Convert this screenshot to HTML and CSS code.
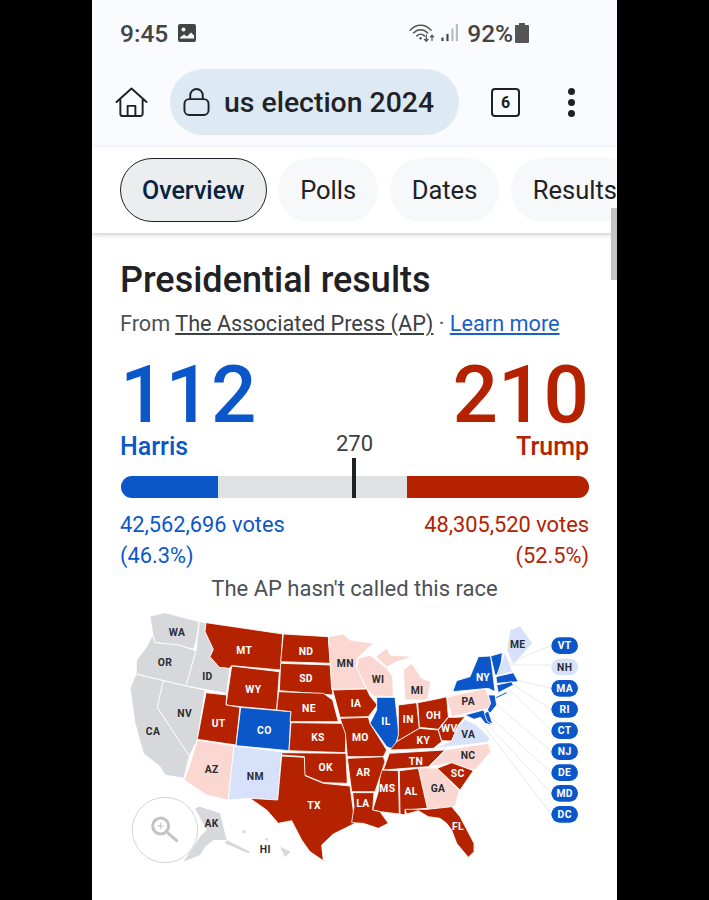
FILE: index.html
```html
<!DOCTYPE html>
<html lang="en">
<head>
<meta charset="utf-8">
<title>us election 2024</title>
<link rel="stylesheet" href="styles.css">
</head>
<body>
<div class="phone">
  <header class="chrome">
    <div class="status">
      <span class="time">9:45</span>
      <svg class="ic-photo" viewBox="0 0 18 18"><path fill="#444" fill-rule="evenodd" d="M2 0h14a2 2 0 0 1 2 2v14a2 2 0 0 1-2 2H2a2 2 0 0 1-2-2V2a2 2 0 0 1 2-2zM2 14.500h14v-3l-3-3-4 4-3-2-4 3z"/><circle cx="5.500" cy="5.500" r="2" fill="#fafbfe"/></svg>
      <span class="status-right">
        <svg class="ic-wifi" viewBox="0 0 28 20"><g fill="none" stroke="#555" stroke-width="1.500" stroke-linecap="round"><path d="M1 6.500C7-.5 17-.5 23 6.500"/><path d="M4.500 9.500c4.500-4.500 10.500-4.500 15 0"/><path d="M8 12.500c2.500-2.500 5.500-2.500 8 0"/></g><circle cx="12" cy="15" r="1.300" fill="#555"/><path fill="none" stroke="#555" stroke-width="1.300" d="M18 11v7M15.800 15.800L18 18.200l2.200-2.400M24 18v-6M22 14l2-2.200 2 2.200"/></svg>
        <svg class="ic-signal" viewBox="0 0 19 20"><rect x="0" y="15" width="2.400" height="4" fill="#444"/><rect x="5.500" y="11" width="2.400" height="8" fill="#444"/><rect x="11" y="5" width="2.400" height="14" fill="#bbb"/><rect x="16" y="0" width="2.400" height="19" fill="#bbb"/></svg>
        <span class="battery-text">92%</span>
        <svg class="ic-batt" viewBox="0 0 14 20"><path fill="#555" d="M4 0h6v2h3a1 1 0 0 1 1 1v16a1 1 0 0 1-1 1H1a1 1 0 0 1-1-1V3a1 1 0 0 1 1-1h3z"/></svg>
      </span>
    </div>
    <div class="toolbar">
      <svg class="ic-home" viewBox="0 0 34 32"><path fill="none" stroke="#202124" stroke-width="2" stroke-linejoin="round" stroke-linecap="round" d="M1.500 15.500L17 1.500l15.500 14M5.500 13v14.500a2.500 2.500 0 0 0 2.500 2.500h18a2.500 2.500 0 0 0 2.500-2.500V13M13 30V19.500h8V30"/></svg>
      <div class="omnibox">
        <svg class="ic-lock" viewBox="0 0 28 30"><path fill="none" stroke="#202124" stroke-width="2" d="M7.500 12V8a6.500 6.500 0 0 1 13 0v4"/><rect x="1.500" y="12" width="25" height="16.500" rx="5" fill="none" stroke="#202124" stroke-width="2"/></svg>
        <span class="query">us election 2024</span>
      </div>
      <span class="tabcount">6</span>
      <span class="menu"><i></i><i></i><i></i></span>
    </div>
  </header>

  <nav class="tabs">
    <span class="chip active">Overview</span>
    <span class="chip">Polls</span>
    <span class="chip">Dates</span>
    <span class="chip">Results</span>
  </nav>
  <div class="scrollthumb"></div>

  <main class="card">
    <h1>Presidential results</h1>
    <p class="source">From <a class="ap">The Associated Press (AP)</a> · <a class="learn">Learn more</a></p>
    <div class="totals">
      <div class="col blue"><div class="big">112</div><div class="name">Harris</div></div>
      <div class="col red right"><div class="big">210</div><div class="name">Trump</div></div>
    </div>
    <div class="mark">270</div>
    <div class="bar">
      <span class="bar-blue"></span><span class="bar-red"></span><span class="tick"></span>
    </div>
    <div class="votes">
      <div class="blue">42,562,696 votes<br>(46.3%)</div>
      <div class="red right">48,305,520 votes<br>(52.5%)</div>
    </div>
    <p class="note">The AP hasn't called this race</p>

    <svg class="map" viewBox="0 0 1470 780">
      <g class="lines">
        <path d="M1180 165L1324 107M1200 165H1324M1220 210L1324 235M1210 225L1324 298M1195 235L1324 362M1155 280L1324 425M1140 320L1324 488M1130 340L1324 550M1115 340L1324 613"/>
      </g>
      <g class="states">
        <polygon class="g" points="120,18 165,8 268,35 257,100 250,118 205,105 135,98 128,70"/>
        <polygon class="g" points="128,75 135,98 205,105 258,122 228,228 78,192 80,150 110,110"/>
        <polygon class="g" points="78,192 160,212 142,292 238,438 222,505 165,495 150,470 100,430 75,340 60,235"/>
        <polygon class="g" points="160,212 228,228 285,240 262,390 238,438 142,292"/>
        <polygon class="g" points="268,35 288,38 285,65 310,118 300,140 328,172 360,172 350,250 228,228 258,122"/>
        <polygon class="r" points="288,38 518,72 512,180 365,167 358,175 328,172 300,140 310,118 285,65"/>
        <polygon class="r" points="365,168 508,185 500,300 390,290 348,285"/>
        <polygon class="r" points="288,248 350,255 348,285 390,292 378,405 262,388"/>
        <polygon class="b" points="392,292 543,305 537,422 378,407"/>
        <polygon class="lr" points="262,390 372,408 355,570 290,555 222,510 238,470"/>
        <polygon class="lb" points="372,408 515,425 503,570 420,565 355,570"/>
        <polygon class="r" points="520,72 655,80 662,160 512,155"/>
        <polygon class="r" points="512,160 662,165 668,255 508,242"/>
        <polygon class="r" points="506,245 640,250 668,270 685,335 540,335 543,305 500,300"/>
        <polygon class="r" points="543,338 695,340 708,365 706,428 537,422"/>
        <polygon class="r" points="515,428 708,430 712,520 640,518 583,495 583,440 515,435"/>
        <polygon class="r" points="515,438 583,442 585,497 640,520 720,528 735,640 670,672 635,705 640,752 600,725 575,690 545,632 505,640 470,600 420,565 503,570"/>
        <polygon class="lr" points="655,80 700,72 720,90 790,100 742,145 738,170 770,237 665,238"/>
        <polygon class="r" points="668,240 770,237 780,258 802,285 775,320 690,322"/>
        <polygon class="r" points="690,325 775,322 780,340 830,420 820,440 712,440 706,370"/>
      </g>
      <g class="states" transform="translate(720 0)">
        <polygon class="b" points="80,262 135,262 147,375 130,418 110,410 60,340 80,300"/>
        <polygon class="lr" points="25,145 60,135 110,175 128,200 130,260 70,258 50,235 20,175"/>
        <polygon class="lr" points="165,270 160,180 185,160 215,205 242,215 232,270"/>
        <polygon class="lr" points="78,140 110,115 120,135 190,140 140,155 110,172"/>
        <polygon class="r" points="145,285 200,278 208,355 140,395 145,375"/>
        <polygon class="r" points="203,278 235,272 270,265 290,260 295,320 265,358 208,352"/>
        <polygon class="r" points="120,420 140,395 208,355 265,360 275,395 250,415"/>
        <polygon class="r" points="265,360 295,322 320,322 345,320 325,345 305,393 275,392"/>
        <polygon class="lb" points="255,415 305,393 322,352 345,328 380,345 420,385 412,397"/>
        <polygon class="r" points="100,480 118,430 285,420 235,470 205,472"/>
        <polygon class="lr" points="240,468 285,420 415,400 422,425 375,480 330,470 305,458 270,465"/>
        <polygon class="r" points="262,475 305,458 370,482 330,540"/>
        <polygon class="lr" points="205,473 262,475 328,542 315,590 232,600"/>
        <polygon class="r" points="148,482 205,475 232,595 165,600 165,615 150,612"/>
        <polygon class="r" points="92,480 145,482 148,612 90,605 68,600 85,545"/>
        <polygon class="r" points="-8,445 100,440 105,455 75,545 5,545"/>
        <polygon class="r" points="8,548 72,548 68,600 90,605 115,640 85,655 40,640 5,638 12,590"/>
        <polygon class="r" points="165,598 232,598 305,590 330,620 372,700 372,725 355,742 320,700 305,660 290,640 270,625 235,620 205,602 170,612"/>
        <polygon class="lr" points="290,262 405,235 425,280 415,295 305,320"/>
        <polygon class="b" points="308,245 320,212 360,200 385,140 422,138 435,245 415,235"/>
        <polygon class="b" points="422,138 457,128 450,195 435,195"/>
        <polygon class="lb" points="465,125 480,165 488,185 440,198"/>
        <polygon class="lb" points="470,120 480,60 510,48 548,100 490,165"/>
        <polygon class="b" points="438,200 490,188 505,215 440,220"/>
        <polygon class="b" points="440,225 485,215 490,225 445,248"/>
        <polygon class="b" points="435,262 470,245 472,250 440,265"/>
        <polygon class="b" points="415,255 435,255 440,285 420,310 412,300 422,280"/>
        <polygon class="b" points="345,315 400,300 425,345 405,340 392,322 372,328"/>
        <polygon class="b" points="403,310 415,303 428,342 412,335"/>
      </g>
      <g class="ak">
        <path class="g" d="M255 595L270 590L330 610L350 690L310 690L285 710L270 735L220 755L255 705L270 680L290 660Z"/>
        <path class="g" d="M350 690L420 725L415 730L345 700ZM510 710L542 725L525 742Z"/>
        <circle class="g" cx="470" cy="688" r="4"/><circle class="g" cx="402" cy="665" r="5"/>
      </g>
      <g class="zoom">
        <circle class="zoom-ring" cx="165" cy="660" r="98"/>
        <circle class="zoom-lens" cx="152" cy="648" r="24"/>
        <path class="zoom-handle" d="M175 670L200 692"/>
        <path class="zoom-plus" d="M152 638V658M142 648H162"/>
      </g>
      <g class="labels dark">
        <text x="201" y="78">WA</text><text x="165" y="168">OR</text><text x="292" y="209">ID</text><text x="224" y="321">NV</text><text x="129" y="376">CA</text>
        <text x="305" y="488">AZ</text><text x="436" y="510">NM</text><text x="706" y="172">MN</text>
        <text x="305" y="650">AK</text><text x="466" y="730">HI</text>
        <text x="804" y="218">WI</text><text x="921" y="253">MI</text><text x="1075" y="286">PA</text><text x="1223" y="113">ME</text>
        <text x="1075" y="384">VA</text><text x="1074" y="447">NC</text><text x="984" y="546">GA</text>
      </g>
      <g class="labels light">
        <text x="403" y="131">MT</text><text x="430" y="248">WY</text><text x="326" y="352">UT</text><text x="463" y="371">CO</text>
        <text x="588" y="135">ND</text><text x="588" y="217">SD</text><text x="597" y="306">NE</text><text x="624" y="393">KS</text><text x="647" y="483">OK</text><text x="612" y="596">TX</text>
        <text x="738" y="290">IA</text><text x="751" y="393">MO</text><text x="760" y="497">AR</text><text x="759" y="592">LA</text>
        <text x="828" y="344">IL</text><text x="895" y="338">IN</text><text x="971" y="326">OH</text><text x="940" y="402">KY</text><text x="1018" y="366">WV</text>
        <text x="918" y="465">TN</text><text x="832" y="546">MS</text><text x="903" y="556">AL</text><text x="1043" y="500">SC</text><text x="1044" y="660">FL</text><text x="1119" y="213">NY</text>
      </g>
      <g class="pills">
        <rect class="b" x="1324" y="82" width="80" height="50" rx="25"/>
        <rect class="lb" x="1324" y="146" width="80" height="50" rx="25"/>
        <rect class="b" x="1324" y="210" width="80" height="50" rx="25"/>
        <rect class="b" x="1324" y="273" width="80" height="50" rx="25"/>
        <rect class="b" x="1324" y="337" width="80" height="50" rx="25"/>
        <rect class="b" x="1324" y="400" width="80" height="50" rx="25"/>
        <rect class="b" x="1324" y="463" width="80" height="50" rx="25"/>
        <rect class="b" x="1324" y="525" width="80" height="50" rx="25"/>
        <rect class="b" x="1324" y="588" width="80" height="50" rx="25"/>
      </g>
      <g class="labels light">
        <text x="1364" y="118">VT</text><text x="1364" y="246">MA</text><text x="1364" y="309">RI</text><text x="1364" y="373">CT</text><text x="1364" y="436">NJ</text><text x="1364" y="499">DE</text><text x="1364" y="561">MD</text><text x="1364" y="624">DC</text>
      </g>
      <g class="labels dark"><text x="1364" y="182">NH</text></g>
    </svg>
  </main>
</div>
</body>
</html>
```

FILE: styles.css
```css
* { box-sizing: border-box; }
html, body { margin: 0; height: 100%; background: #000; }
body { font-family: Roboto, "Liberation Sans", sans-serif; overflow: hidden; }

.phone {
  position: relative;
  width: 525px;
  height: 900px;
  margin-left: 92px;
  background: #fff;
  overflow: hidden;
}

.chrome { background: #fafbfe; height: 147px; }

.status {
  display: flex;
  align-items: center;
  height: 66px;
  padding: 0 0 0 28px;
  color: #444;
}
.time { font-size: 24.500px; font-weight: 500; }
.ic-photo { width: 18px; height: 18px; margin-left: 10px; }
.status-right { display: flex; align-items: center; margin-left: 213px; }
.ic-wifi { width: 27px; height: 19px; }
.ic-signal { width: 18px; height: 18px; margin-left: 5px; }
.battery-text { font-size: 24.500px; font-weight: 500; margin-left: 8px; }
.ic-batt { width: 14px; height: 20px; margin-left: 2px; }

.toolbar {
  display: flex;
  align-items: center;
  height: 72px;
  padding-left: 23px;
}
.ic-home { width: 33px; height: 31px; }
.omnibox {
  display: flex;
  align-items: center;
  width: 289px;
  height: 66px;
  margin-left: 22px;
  padding-left: 13px;
  border-radius: 33px;
  background: #deeaf3;
}
.ic-lock { width: 27px; height: 30px; }
.query { margin-left: 14px; font-size: 28.400px; font-weight: 500; color: #1f2328; white-space: nowrap; }
.tabcount {
  display: flex;
  align-items: center;
  justify-content: center;
  width: 29px;
  height: 29px;
  margin-left: 32px;
  border: 2px solid #202124;
  border-radius: 4px;
  font-size: 16px;
  font-weight: 700;
  color: #202124;
}
.menu { display: flex; flex-direction: column; gap: 4px; margin-left: 48px; }
.menu i { width: 7px; height: 7px; border-radius: 50%; background: #202124; }

.tabs {
  display: flex;
  gap: 11.500px;
  height: 86px;
  padding: 11px 0 0 28px;
  background: #fff;
  box-shadow: 0 2px 5px rgba(60, 64, 67, .25);
  overflow: hidden;
  position: relative;
}
.chip {
  display: flex;
  align-items: center;
  flex: none;
  height: 64px;
  padding: 0 22px;
  border-radius: 32px;
  background: #f6f8f9;
  font-size: 25.500px;
  color: #202124;
}
.chip.active {
  padding: 0 21px;
  border: 1.500px solid #202124;
  background: #ebedef;
  color: #06243f;
  font-size: 25px;
  font-weight: 500;
}
.scrollthumb {
  position: absolute;
  right: 0;
  top: 208px;
  width: 6px;
  height: 72px;
  background: #c4c4c4;
}

.card { padding: 25px 28px 0 28px; }
h1 { margin: 0; font-size: 36px; line-height: 44px; font-weight: 500; color: #202124; }
.source { margin: 9px 0 0; font-size: 21.700px; line-height: 26px; color: #4d5156; }
.ap { color: #3c4043; text-decoration: underline; }
.learn { color: #1a5fc8; text-decoration: underline; }

.blue { color: #0b57c9; }
.red { color: #b42200; }
.right { text-align: right; }

.totals { display: flex; justify-content: space-between; margin-top: 17px; }
.big { font-size: 80px; font-weight: 500; line-height: 73px; margin-top: 5px; }
.name { font-size: 25px; line-height: 30px; font-weight: 500; }
.mark { margin-top: -31px; text-align: center; font-size: 22px; line-height: 26px; color: #3c4043; }
.bar {
  position: relative;
  height: 22px;
  margin: 19px 0 0 1px;
  border-radius: 11px;
  background: #dfe1e3;
}
.bar-blue, .bar-red { position: absolute; top: 0; bottom: 0; }
.bar-blue { left: 0; width: 97px; border-radius: 11px 0 0 11px; background: #0b57c9; }
.bar-red { right: 0; width: 182px; border-radius: 0 11px 11px 0; background: #b42200; }
.tick { position: absolute; left: 231px; top: -18px; width: 4px; height: 40px; background: #202124; }

.votes {
  display: flex;
  justify-content: space-between;
  margin-top: 12px;
  font-size: 21.800px;
  line-height: 30.500px;
}
.note { margin: 3px 0 0; text-align: center; font-size: 22px; line-height: 30px; color: #4d5156; }

.map { display: block; width: 490px; height: 260px; margin: 6px 0 0 -10px; }
.lines path { fill: none; stroke: #e6e9f0; stroke-width: 3; }
.states polygon { stroke: #fff; stroke-width: 2.500; stroke-linejoin: round; }
.g { fill: #d6d8db; }
.r { fill: #b42200; }
.b { fill: #0b57c9; }
.lb { fill: #d7e2fa; }
.lr { fill: #fad7d1; }
.zoom-ring { fill: #fff; stroke: #d4d5d6; stroke-width: 3; }
.zoom-lens, .zoom-handle, .zoom-plus { fill: none; stroke: #c4c4c4; }
.zoom-lens { stroke-width: 9; }
.zoom-handle { stroke-width: 9; stroke-linecap: round; }
.zoom-plus { stroke-width: 3; }
.labels text { font-size: 31px; font-weight: 700; letter-spacing: 1px; text-anchor: middle; }
.labels.dark text { fill: #2a2d33; }
.labels.light text { fill: #fff; }
```
